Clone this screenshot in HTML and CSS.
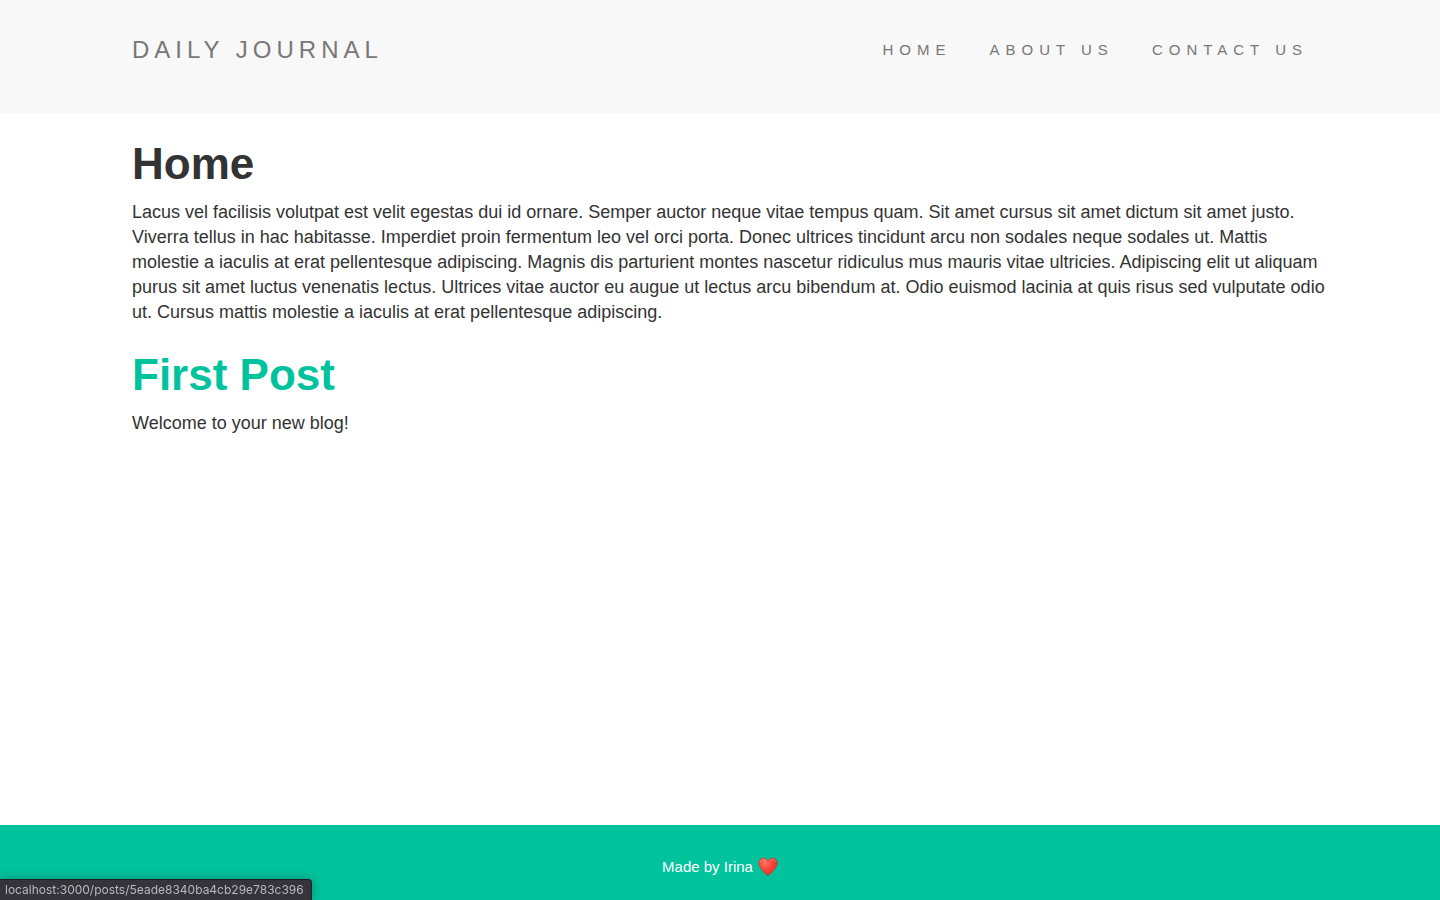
FILE: index.html
```html
<!DOCTYPE html>
<html lang="en">
<head>
<meta charset="utf-8">
<meta name="viewport" content="width=device-width, initial-scale=1">
<title>Daily Journal</title>
<link rel="stylesheet" href="styles.css">
</head>
<body>
<header class="site-header">
  <nav class="container navbar">
    <a class="brand" href="#">DAILY JOURNAL</a>
    <ul class="nav-links">
      <li><a href="#">HOME</a></li>
      <li><a href="#">ABOUT US</a></li>
      <li><a href="#">CONTACT US</a></li>
    </ul>
  </nav>
</header>
<main class="container content">
  <h1 class="title">Home</h1>
  <p class="text">Lacus vel facilisis volutpat est velit egestas dui id ornare. Semper auctor neque vitae tempus quam. Sit amet cursus sit amet dictum sit amet justo. Viverra tellus in hac habitasse. Imperdiet proin fermentum leo vel orci porta. Donec ultrices tincidunt arcu non sodales neque sodales ut. Mattis molestie a iaculis at erat pellentesque adipiscing. Magnis dis parturient montes nascetur ridiculus mus mauris vitae ultricies. Adipiscing elit ut aliquam purus sit amet luctus venenatis lectus. Ultrices vitae auctor eu augue ut lectus arcu bibendum at. Odio euismod lacinia at quis risus sed vulputate odio ut. Cursus mattis molestie a iaculis at erat pellentesque adipiscing.</p>
  <h1 class="title"><a class="post-link" href="#">First Post</a></h1>
  <p class="text">Welcome to your new blog!</p>
</main>
<footer class="site-footer">
  <p class="credit">Made by Irina
    <svg class="heart" viewBox="0 0 20 20" role="img" aria-label="love">
      <defs>
        <radialGradient id="heart-fill" cx=".35" cy=".25" r=".85">
          <stop offset="0" stop-color="#ff7565"/>
          <stop offset=".45" stop-color="#fb453b"/>
          <stop offset="1" stop-color="#d42a24"/>
        </radialGradient>
      </defs>
      <path d="M10 4.2C8.900 2 7 1.100 5.200 1.100C2.600 1.100.8 3.200.8 6C.8 10.800 5.800 14.900 10 18.900C14.200 14.900 19.200 10.800 19.200 6C19.200 3.200 17.400 1.100 14.800 1.100C13 1.100 11.100 2 10 4.200Z" fill="url(#heart-fill)" stroke="#b93a2d" stroke-width=".6"/>
      <path d="M2.500 4.500C3.200 2.600 6.300 1.700 8 3.500M12 3.500C13.700 1.700 16.800 2.600 17.500 4.500" fill="none" stroke="#ffa08e" stroke-width="1" stroke-linecap="round" opacity=".65"/>
    </svg>
  </p>
</footer>
<div class="status-bar">localhost:3000/posts/5eade8340ba4cb29e783c396</div>
</body>
</html>
```

FILE: styles.css
```css
* { box-sizing: border-box; }

body {
  display: flex;
  flex-direction: column;
  min-height: 100vh;
  margin: 0;
  background: #fff;
  color: #333;
  font-family: "Helvetica Neue", "Liberation Sans", Arial, sans-serif;
  font-size: 18px;
  line-height: 25px;
}

a { color: inherit; text-decoration: none; }

.container {
  width: 100%;
  max-width: 1206px;
  margin: 0 auto;
  padding: 0 15px;
}

.site-header {
  padding: 37px 0 51px;
  background: #f8f8f8;
  color: #777;
}

.navbar {
  display: flex;
  align-items: center;
  justify-content: space-between;
}

.brand { font-size: 24px; letter-spacing: 5px; }

.nav-links {
  display: flex;
  gap: 38px;
  margin: 0;
  padding: 0;
  list-style: none;
  font-size: 15px;
  letter-spacing: 6px;
}

.content { flex: 1; padding-top: 26px; }

.title {
  margin: 0 0 12px;
  font-size: 44px;
  font-weight: 700;
  line-height: 49px;
}

.text { margin: 0 -20px 25px 0; }

.post-link { color: #00c39e; }

.site-footer {
  padding: 29px 15px 21px;
  background: #00c39e;
  color: #fff;
}

.credit {
  display: flex;
  align-items: center;
  justify-content: center;
  gap: 5px;
  margin: 0;
  font-size: 15px;
}

.heart { width: 20px; height: 20px; }

.status-bar {
  position: fixed;
  bottom: 0;
  left: 0;
  padding: 0 7px 0 5px;
  border-top: 1px solid #222226;
  border-right: 1px solid #222226;
  border-top-right-radius: 4px;
  background: #35343a;
  box-shadow: 0 0 12px rgba(0, 0, 0, .3);
  color: #b9b8bb;
  font-family: Inter, sans-serif;
  font-size: 12px;
  line-height: 20px;
}
```
